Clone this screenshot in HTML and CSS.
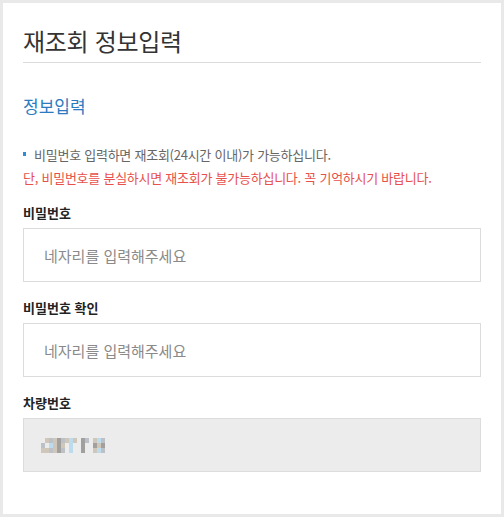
FILE: index.html
```html
<!DOCTYPE html>
<html lang="ko">

<head>
  <meta charset="utf-8">
  <title>재조회 정보입력</title>
  <link rel="stylesheet" href="styles.css">
</head>

<body>
  <div class="card">
    <h1 class="page-title">재조회 정보입력</h1>

    <h2 class="section-title">정보입력</h2>

    <ul class="notice">
      <li class="notice-item">비밀번호 입력하면 재조회(24시간 이내)가 가능하십니다.</li>
      <li class="notice-warn">단, 비밀번호를 분실하시면 재조회가 불가능하십니다. 꼭 기억하시기 바랍니다.</li>
    </ul>

    <div class="field">
      <label class="field-label" for="pw">비밀번호</label>
      <input class="field-input" id="pw" type="password" placeholder="네자리를 입력해주세요" />
    </div>

    <div class="field">
      <label class="field-label" for="pwConfirm">비밀번호 확인</label>
      <input class="field-input" id="pwConfirm" type="password" placeholder="네자리를 입력해주세요" />
    </div>

    <div class="field">
      <div class="field-label">차량번호</div>
      <!-- car number is blurred out in the original -->
      <div class="field-input readonly">
        <div class="mosaic">
          <span class="m0"></span><span class="m1"></span><span class="m2"></span><span class="m1"></span><span class="m3"></span><span class="m2"></span><span class="m1"></span><span class="m4"></span><span class="m1"></span><span class="m0"></span><span class="m3"></span><span class="m2"></span><span class="m0"></span><span class="m1"></span><span class="m4"></span><span class="m2"></span>
          <span class="m2"></span><span class="m0"></span><span class="m4"></span><span class="m1"></span><span class="m3"></span><span class="m1"></span><span class="m0"></span><span class="m4"></span><span class="m0"></span><span class="m0"></span><span class="m3"></span><span class="m0"></span><span class="m0"></span><span class="m3"></span><span class="m1"></span><span class="m3"></span>
          <span class="m1"></span><span class="m1"></span><span class="m2"></span><span class="m1"></span><span class="m3"></span><span class="m2"></span><span class="m0"></span><span class="m4"></span><span class="m0"></span><span class="m0"></span><span class="m3"></span><span class="m0"></span><span class="m0"></span><span class="m1"></span><span class="m4"></span><span class="m2"></span>
        </div>
      </div>
    </div>
  </div>
</body>

</html>
```

FILE: styles.css
```css
body {
  margin: 0;
  padding: 3px;
  background-color: #e9e9e9;
  font-family: "Noto Sans CJK KR", "Noto Sans", sans-serif;
  color: #333;
}

.card {
  background-color: #fff;
  height: 511px;
  box-sizing: border-box;
  padding: 23px 20px 0 20px;
}

/* Page heading */
.page-title {
  margin: 0;
  padding-bottom: 6px;
  border-bottom: 1px solid #dcdcdc;
  font-size: 24px;
  font-weight: normal;
  line-height: 30px;
  color: #333;
  letter-spacing: -0.3px;
}

.section-title {
  margin: 33px 0 0 0;
  font-size: 17px;
  font-weight: normal;
  line-height: 20px;
  color: #2b7bbf;
}

/* Notice list */
.notice {
  list-style-type: none;
  margin: 27px 0 0 0;
  padding: 0;
  font-size: 13px;
  line-height: 23px;
  letter-spacing: -0.25px;
}

.notice-item {
  position: relative;
  padding-left: 11px;
  color: #666;
}

.notice-item:before {
  content: "";
  position: absolute;
  left: 0;
  top: 9px;
  width: 3px;
  height: 4px;
  background-color: #2b8ed8;
}

.notice-warn {
  color: #e8514b;
}

/* Form fields */
.field {
  margin-top: 16px;
}

.notice + .field {
  margin-top: 14px;
}

.field-label {
  display: block;
  margin-bottom: 5px;
  font-size: 13px;
  font-weight: bold;
  line-height: 20px;
  color: #222;
}

.field-input {
  display: block;
  width: 100%;
  height: 54px;
  box-sizing: border-box;
  padding: 0 20px;
  border: 1px solid #dcdcdc;
  background-color: #fff;
  font-family: "Noto Sans CJK KR", "Noto Sans", sans-serif;
  font-size: 15px;
  color: #333;
  outline: none;
}

.field-input::placeholder {
  color: #8a8a8a;
}

.readonly {
  display: flex;
  align-items: center;
  background-color: #ececec;
}

.mosaic {
  display: grid;
  grid-template-columns: repeat(16, 4px);
  grid-auto-rows: 5px;
  margin-left: -3px;
}

.m0 { background-color: #ececec; }
.m1 { background-color: #cfc8ba; }
.m2 { background-color: #bcc1c8; }
.m3 { background-color: #a2a09e; }
.m4 { background-color: #bcdcee; }
```
